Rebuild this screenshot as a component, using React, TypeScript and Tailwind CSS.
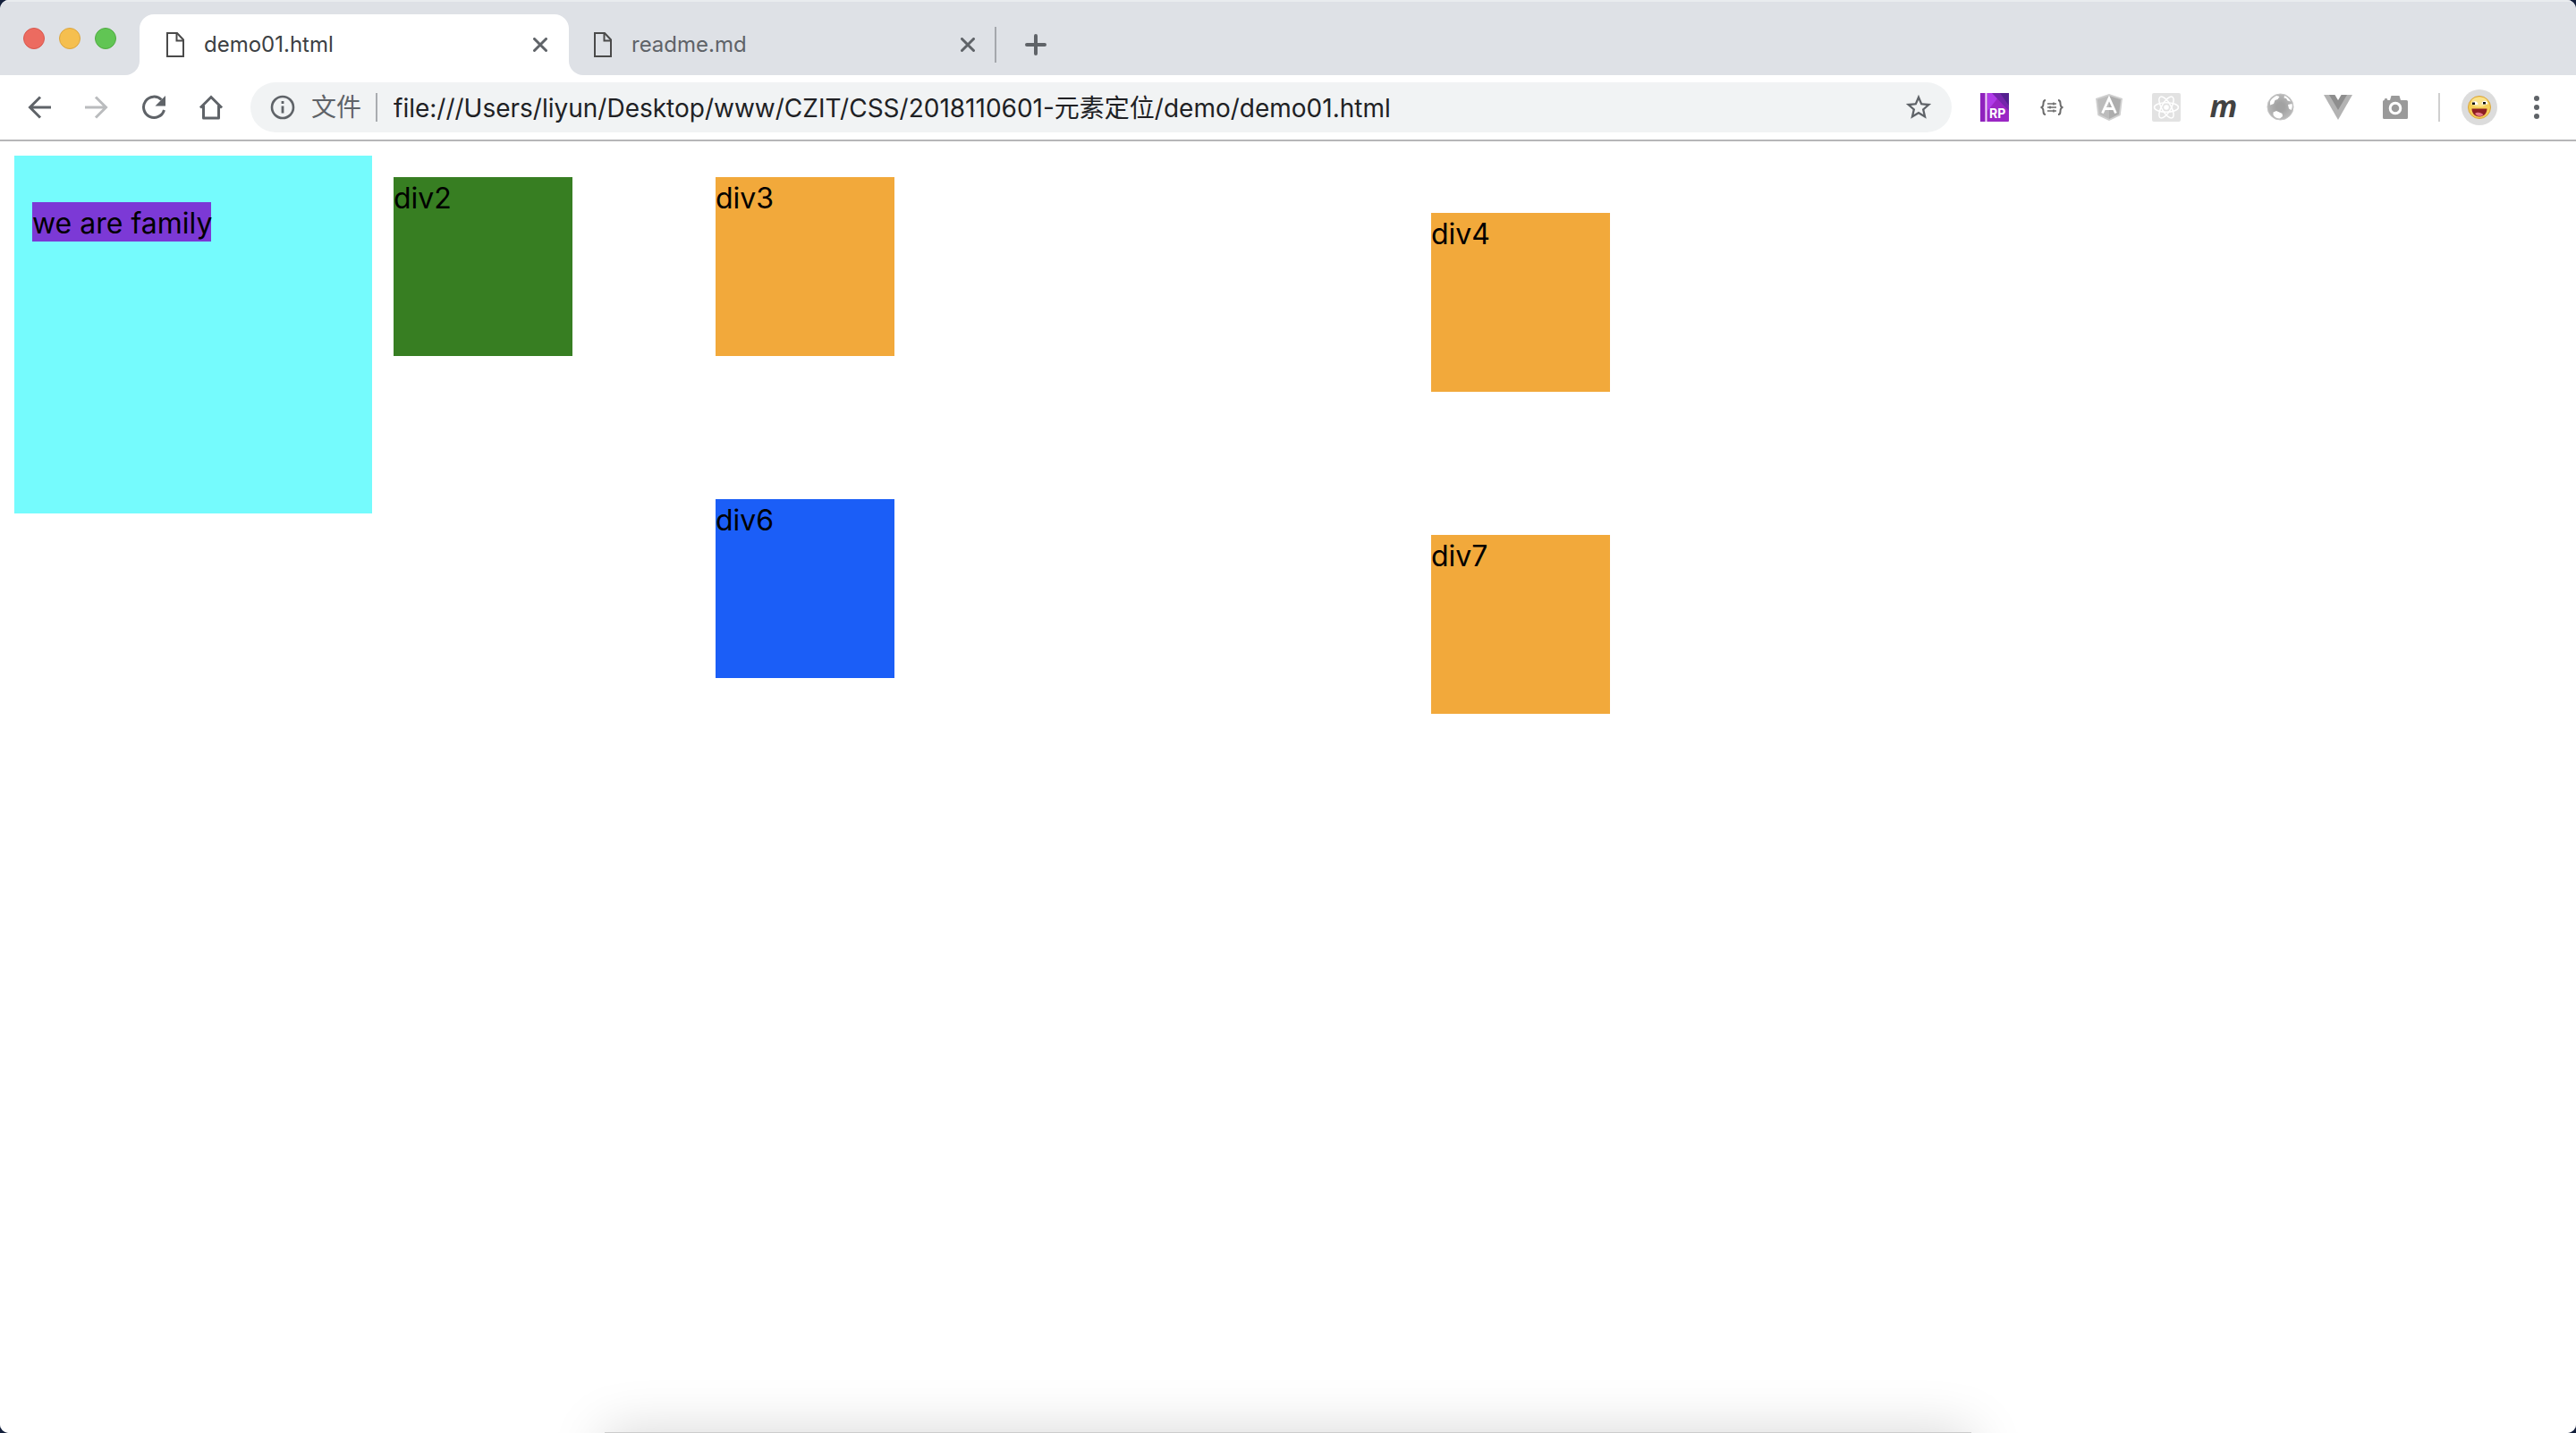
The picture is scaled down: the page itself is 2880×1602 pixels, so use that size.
import React from "react";

function FileIcon() {
  return (
    <svg width="20" height="28" viewBox="0 0 20 28" fill="none" stroke="#4a4a4a" strokeWidth="2" className="shrink-0">
      <path d="M1 1h11l7 7.500v18.500H1z" />
      <path d="M11.500 1v8.500H19" />
    </svg>
  );
}

function CloseIcon() {
  return (
    <svg width="16" height="16" viewBox="0 0 16 16" stroke="#5f6368" strokeWidth="3" strokeLinecap="round">
      <path d="M1.500 1.500l13 13M14.500 1.500l-13 13" />
    </svg>
  );
}

function IconButton({ label, children }: { label: string; children: React.ReactNode }) {
  return (
    <button type="button" aria-label={label} className="flex h-14 w-16 shrink-0 items-center justify-center">
      {children}
    </button>
  );
}

function TabStrip() {
  return (
    <div className="flex h-[84px] items-end border-t-2 border-[#e9ecef] bg-[#dee1e6]">
      <div className="flex h-[82px] w-[140px] shrink-0 items-center gap-4 pl-[26px]">
        <button type="button" aria-label="Close window" className="size-6 rounded-full border border-[#d8584e] bg-[#ec6b60]" />
        <button type="button" aria-label="Minimize window" className="size-6 rounded-full border border-[#dba53f] bg-[#f5bf4f]" />
        <button type="button" aria-label="Zoom window" className="size-6 rounded-full border border-[#50ab42] bg-[#61c554]" />
      </div>
      <div className="size-4 bg-white">
        <div className="size-4 rounded-br-2xl bg-[#dee1e6]" />
      </div>
      <div className="flex h-[68px] w-[480px] items-center rounded-t-2xl bg-white pr-6 pl-[30px]">
        <FileIcon />
        <span className="ml-[22px] grow text-2xl text-[#3c4043]">demo01.html</span>
        <button type="button" aria-label="Close demo01.html">
          <CloseIcon />
        </button>
      </div>
      <div className="size-4 bg-white">
        <div className="size-4 rounded-bl-2xl bg-[#dee1e6]" />
      </div>
      <div className="flex h-[68px] w-[460px] items-center pr-[22px] pl-3">
        <FileIcon />
        <span className="ml-[22px] grow text-2xl text-[#5f6368]">readme.md</span>
        <button type="button" aria-label="Close readme.md">
          <CloseIcon />
        </button>
      </div>
      <div className="flex h-[68px] items-center">
        <div className="h-10 w-0.5 bg-[#a5a8ad]" />
        <button type="button" aria-label="New tab" className="ml-8">
          <svg width="24" height="24" viewBox="0 0 24 24" stroke="#5f6368" strokeWidth="4" strokeLinecap="round">
            <path d="M12 2v20M2 12h20" />
          </svg>
        </button>
      </div>
    </div>
  );
}

function Toolbar() {
  return (
    <div className="flex h-[74px] items-center border-b-2 border-[#b6b6b8] bg-white px-3">
      <IconButton label="Back">
        <svg width="26" height="26" viewBox="0 0 26 26" fill="none" stroke="#5f6368" strokeWidth="3">
          <path d="M26 13H3M14 1.500L2.500 13 14 24.500" />
        </svg>
      </IconButton>
      <IconButton label="Forward">
        <svg width="26" height="26" viewBox="0 0 26 26" fill="none" stroke="#babcbe" strokeWidth="3">
          <path d="M0 13h23M12 1.500L23.500 13 12 24.500" />
        </svg>
      </IconButton>
      <IconButton label="Reload">
        <svg width="28" height="28" viewBox="0 0 28 28" fill="none">
          <path d="M22.500 5.500A11.700 11.700 0 1 0 25.500 17" stroke="#5f6368" strokeWidth="3" />
          <path d="M27 1v11.500H15.500z" fill="#5f6368" />
        </svg>
      </IconButton>
      <IconButton label="Home">
        <svg width="28" height="28" viewBox="0 0 28 28" fill="none" stroke="#5f6368" strokeWidth="3">
          <path d="M2 14.500L14 2.500l12 12" />
          <path d="M5.500 12v14h17V12" strokeLinejoin="round" />
        </svg>
      </IconButton>
      <div className="ml-3 flex h-14 grow items-center rounded-full bg-[#f1f3f4] pr-5 pl-[22px]">
        <svg width="28" height="28" viewBox="0 0 28 28" fill="none" className="shrink-0">
          <circle cx="14" cy="14" r="12" stroke="#5f6368" strokeWidth="2.600" />
          <path d="M14 12.500v8M14 7v3" stroke="#5f6368" strokeWidth="2.800" />
        </svg>
        <label htmlFor="url" className="ml-[18px] shrink-0 text-[28px] text-[#5f6368]">
          文件
        </label>
        <div className="mx-4 h-8 w-0.5 shrink-0 bg-[#a9acb0]" />
        <input
          id="url"
          type="text"
          defaultValue="file:///Users/liyun/Desktop/www/CZIT/CSS/2018110601-元素定位/demo/demo01.html"
          className="h-14 min-w-0 grow bg-transparent pb-0.5 pl-0.5 text-[28px] text-[#202124] outline-none"
        />
        <button type="button" aria-label="Bookmark this page">
          <svg width="34" height="34" viewBox="0 0 24 24" fill="#5f6368">
            <path d="M22 9.240l-7.190-.620L12 2 9.190 8.630 2 9.240l5.460 4.730L5.820 21 12 17.270 18.180 21l-1.630-7.030L22 9.240zM12 15.400l-3.760 2.270 1-4.280-3.320-2.880 4.380-.380L12 6.100l1.710 4.040 4.380.380-3.320 2.880 1 4.280L12 15.400z" />
          </svg>
        </button>
      </div>
      <div className="ml-4 flex">
        <IconButton label="Axure RP">
          <svg width="32" height="32" viewBox="0 0 32 32">
            <rect width="32" height="32" rx="1" fill="#9a26c4" />
            <path d="M8 0h16L8 20z" fill="#b03be8" />
            <path d="M18 0h14v16z" fill="#54208f" />
            <path d="M13 0h9l10 14v6z" fill="#7526ab" />
            <path d="M0 0h5v32H0z" fill="#8f22bd" />
            <path d="M5.500 0h2v32h-2z" fill="#f3dcfb" />
            <text x="10" y="28" fontSize="14" fontWeight="700" fill="#fff" fontFamily="Inter">RP</text>
          </svg>
        </IconButton>
        <IconButton label="JSON formatter">
          <svg width="26" height="18" viewBox="0 0 26 18" fill="none" stroke="#6b6b6b">
            <path d="M6 1C3.500 1 3.500 2.500 3.500 4.500S3.500 9 .5 9c3 0 3 2.500 3 4.500S3.500 17 6 17M20 1c2.500 0 2.500 1.500 2.500 3.500S22.500 9 25.500 9c-3 0-3 2.500-3 4.500S22.500 17 20 17" strokeWidth="2" />
            <path d="M8 5h10M8 9h10M8 13h10" strokeWidth="1.300" />
            <path d="M15 3.500v3M11 7.500v3M15 11.500v3" strokeWidth="1.500" />
          </svg>
        </IconButton>
        <IconButton label="AngularJS">
          <svg width="30" height="30" viewBox="0 0 30 30">
            <path d="M15 0l15 5-2.300 19L15 30 2.300 24 0 5z" fill="#cfcfcf" />
            <path d="M15 2l13 4.300-2 16.500L15 28z" fill="#adadad" />
            <path d="M15 2L2 6.300l2 16.500L15 28z" fill="#bcbcbc" />
            <path d="M7.500 21.500L15 5l7.500 16.500M10.500 16.500h9" fill="none" stroke="#fff" strokeWidth="2.800" />
          </svg>
        </IconButton>
        <IconButton label="React Developer Tools">
          <svg width="32" height="32" viewBox="0 0 32 32" fill="none" stroke="#fff" strokeWidth="1.500">
            <rect width="32" height="32" rx="2" fill="#e2e2e2" stroke="none" />
            <ellipse cx="16" cy="16" rx="13.500" ry="5.200" />
            <ellipse cx="16" cy="16" rx="13.500" ry="5.200" transform="rotate(60 16 16)" />
            <ellipse cx="16" cy="16" rx="13.500" ry="5.200" transform="rotate(120 16 16)" />
            <circle cx="16" cy="16" r="2.800" fill="#fff" stroke="none" />
          </svg>
        </IconButton>
        <IconButton label="Markdown">
          <span className="pb-1 font-['Open_Sans'] text-[34px] leading-8 font-bold text-[#424242] italic">m</span>
        </IconButton>
        <IconButton label="Globe">
          <svg width="32" height="32" viewBox="0 0 32 32">
            <defs>
              <radialGradient id="sea" cx="0.5" cy="0.5" r="0.55">
                <stop offset="0.3" stopColor="#a2a2a2" />
                <stop offset="1" stopColor="#bdbdbd" />
              </radialGradient>
            </defs>
            <circle cx="15.500" cy="15.500" r="14.500" fill="url(#sea)" />
            <path d="M4 9.500C6 6 8.500 4 11.500 3l3 1-2 3-3 1-1.500 4-4 1.500zM20 3c3 1 5.500 3.500 7 6.500l-3.500-1-1.500-2.500-2.500-.5zM24 13l4.500-1c.6 2.500.3 5-.8 7l-2.700-1.500zM7.500 21.500l3.500-1.500 6.500 3 .5 3-3 2.500c-3.500 0-6-1.500-7.500-4z" fill="#fff" />
            <circle cx="15.500" cy="15.500" r="14.500" fill="none" stroke="#c4c4c4" />
          </svg>
        </IconButton>
        <IconButton label="Vue.js devtools">
          <svg width="32" height="28" viewBox="0 0 32 28">
            <path d="M0 0h32L16 28z" fill="#b3b3b3" />
            <path d="M6 0h6.500L16 6l3.500-6H26L16 17z" fill="#8e8e8e" />
            <path d="M12.500 0h7L16 6z" fill="#fff" />
          </svg>
        </IconButton>
        <IconButton label="Screenshot">
          <svg width="30" height="28" viewBox="0 0 30 28" fill="#9a9a9a">
            <path d="M10.500 1h9l1.500 5h6.500Q29 6 29 7.500v18Q29 27 27.500 27h-25Q1 27 1 25.500v-18Q1 6 2.500 6l1-2h2l1 2H9z" />
            <circle cx="15" cy="15" r="5.800" fill="none" stroke="#fff" strokeWidth="3" />
          </svg>
        </IconButton>
      </div>
      <div className="ml-4 h-8 w-0.5 bg-[#cfcfcf]" />
      <button type="button" aria-label="Profile" className="mr-3 ml-6 flex size-10 items-center justify-center rounded-full bg-[#dcdcdc]">
        <svg width="26" height="26" viewBox="0 0 26 26">
          <circle cx="13" cy="13" r="12.500" fill="#f6cf58" stroke="#d9a43b" />
          <ellipse cx="13" cy="7" rx="9" ry="5.500" fill="#fbe38b" />
          <path d="M4.500 10c0-5 7-5 7 0zM15.500 9.500c0-5 7-5 7 0z" fill="#fff" />
          <path d="M5 7.500h3v2.500H5zM17 7h3v2.500h-3z" fill="#111" />
          <path d="M4.500 14.500h17c0 5-3.500 9-8.500 9s-8.500-4-8.500-9z" fill="#8e1f22" />
          <path d="M8 20c2-2 7-2 9.500 1.500-2.500 2-7 2-9.500-1.500z" fill="#e7798a" />
        </svg>
      </button>
      <IconButton label="Menu">
        <svg width="6" height="26" viewBox="0 0 6 26" fill="#5f6368">
          <circle cx="3" cy="3" r="3" />
          <circle cx="3" cy="13" r="3" />
          <circle cx="3" cy="23" r="3" />
        </svg>
      </IconButton>
    </div>
  );
}

function Boxes() {
  return (
    <main className="flex grow items-start bg-white pt-4 pl-4 text-[32px] leading-12 text-black">
      <div className="size-[400px] bg-[#75fbfd] px-5 pt-[52px]">
        <div className="h-11 w-[200px] bg-[#7c39d6] whitespace-nowrap">we are family</div>
      </div>
      <div className="mt-6 ml-6 size-[200px] bg-[#377e22]">div2</div>
      <div className="mt-6 ml-40 flex flex-col gap-40">
        <div className="size-[200px] bg-[#f2a93b]">div3</div>
        <div className="size-[200px] bg-[#1b5ef7]">div6</div>
      </div>
      <div className="mt-16 ml-[600px] flex flex-col gap-40">
        <div className="size-[200px] bg-[#f2a93b]">div4</div>
        <div className="size-[200px] bg-[#f2a93b]">div7</div>
      </div>
    </main>
  );
}

export default function App() {
  return (
    <div className="bg-[#14203c]">
      <div className="relative flex min-h-screen flex-col overflow-hidden rounded-[10px] bg-white font-['Inter','Noto_Sans_CJK_SC',sans-serif]">
        <TabStrip />
        <Toolbar />
        <Boxes />
        <div className="absolute inset-x-[676px] -bottom-[159px] h-40 bg-[#cccccc] shadow-[0_0_60px_rgba(0,0,0,0.17)]" />
      </div>
    </div>
  );
}
